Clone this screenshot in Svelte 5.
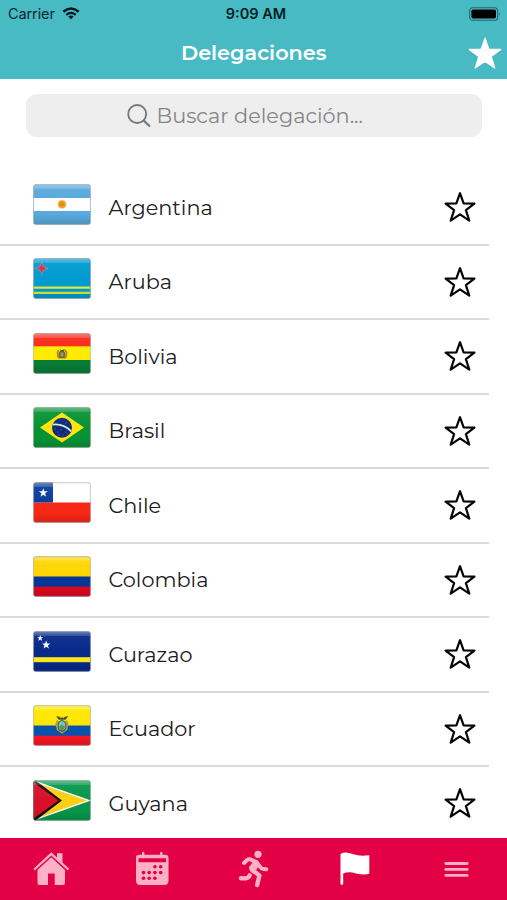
<script>
  let search = $state('');
  let selected = $state('flag');
  let favorites = $state([]);

  const delegations = [
    { id: 'ar', name: 'Argentina' },
    { id: 'aw', name: 'Aruba' },
    { id: 'bo', name: 'Bolivia' },
    { id: 'br', name: 'Brasil' },
    { id: 'cl', name: 'Chile' },
    { id: 'co', name: 'Colombia' },
    { id: 'cw', name: 'Curazao' },
    { id: 'ec', name: 'Ecuador' },
    { id: 'gy', name: 'Guyana' }
  ];

  const tabs = ['home', 'calendar', 'run', 'flag', 'menu'];
  const starPath = 'M16 2L19.6 12.5L30.8 12.6L21.9 19.4L25.2 30.2L16 23.8L6.8 30.2L10.1 19.4L1.2 12.6L12.4 12.5Z';

  let visible = $derived(
    delegations.filter((d) => d.name.toLowerCase().includes(search.toLowerCase()))
  );

  function toggleFavorite(id) {
    favorites = favorites.includes(id) ? favorites.filter((f) => f !== id) : [...favorites, id];
  }
</script>

{#snippet flag(id)}
  <svg class="country" viewBox="0 0 58 41" width="58" height="41">
    <defs>
      <clipPath id="clip-{id}"><rect x=".5" y=".5" width="57" height="40" rx="2.5" /></clipPath>
      <linearGradient id="gloss-{id}" x2="0" y2="1">
        <stop offset="0" stop-color="#fff" stop-opacity=".42" />
        <stop offset=".11" stop-color="#fff" stop-opacity=".2" />
        <stop offset=".13" stop-color="#fff" stop-opacity=".05" />
        <stop offset=".5" stop-color="#fff" stop-opacity="0" />
        <stop offset=".75" stop-color="#000" stop-opacity="0" />
        <stop offset="1" stop-color="#000" stop-opacity=".14" />
      </linearGradient>
    </defs>
    <g clip-path="url(#clip-{id})">
      {#if id === 'ar'}
        <rect width="58" height="41" fill="#58a9dd" />
        <rect y="14" width="58" height="13" fill="#fff" />
        <circle cx="29" cy="20.3" r="4.5" fill="#f8c778" />
        <circle cx="29" cy="20.3" r="3.6" fill="#ee9c22" />
        <circle cx="29" cy="20.3" r="1.8" fill="#d98b22" />
      {:else if id === 'aw'}
        <rect width="58" height="41" fill="#009bd0" />
        <path d="M0 29.6H58M0 34.9H58" stroke="#dce83a" stroke-width="2.4" />
        <path d="M8.7 4.2L10.4 8.6L15 10.3L10.4 12L8.7 16.5L7 12L2.5 10.3L7 8.6Z" fill="#e62935" stroke="#d9e7f3" stroke-opacity=".5" stroke-width=".5" />
      {:else if id === 'bo'}
        <rect width="58" height="14" fill="#fa291a" />
        <rect y="13.3" width="58" height="14" fill="#ffec00" />
        <rect y="27" width="58" height="14" fill="#087c37" />
        <path d="M25.5 17L24.6 19.5L25 24L27 25.5M32 17L33.5 19.5L33 24L31 25.5" fill="none" stroke="#db6829" stroke-width="1.5" />
        <ellipse cx="29" cy="21.5" rx="3.3" ry="4" fill="#327e55" />
        <ellipse cx="29" cy="21.5" rx="1.7" ry="2.3" fill="#e17c4a" />
        <path d="M26.5 16L29 17.4L32 15.8L30.2 18.2L28 18Z" fill="#3d352a" />
      {:else if id === 'br'}
        <rect width="58" height="41" fill="#079334" />
        <path d="M29 5.5L51 20.5L29 35.5L7 20.5Z" fill="#ffe50a" />
        <circle cx="29" cy="20.7" r="10" fill="#102b79" />
        <path d="M19.8 17.6Q30.4 16.4 38.2 24.4" fill="none" stroke="#d4e8eb" stroke-width="1.7" />
        <path d="M21.5 22h1m2 3h1m2-2h1m1 5h1m2-3h1m1 2h1m-10 1h1m6-12h1" stroke="#7393ba" stroke-width=".8" />
      {:else if id === 'cl'}
        <rect width="58" height="41" fill="#fff" />
        <rect y="20.5" width="58" height="21" fill="#f82817" />
        <rect width="20" height="20.5" fill="#0b3d9c" />
        <path d="M10.3 6.2L11.4 9.3H14.8L12.1 11.3L13.1 14.7L10.3 12.7L7.5 14.7L8.5 11.3L5.8 9.3H9.2Z" fill="#fff" />
      {:else if id === 'co'}
        <rect width="58" height="21" fill="#ffd600" />
        <rect y="20.5" width="58" height="10.5" fill="#063596" />
        <rect y="30.7" width="58" height="11" fill="#df0720" />
      {:else if id === 'cw'}
        <rect width="58" height="41" fill="#06298a" />
        <rect y="26.2" width="58" height="5" fill="#f9e71b" />
        <path d="M7.2 4L8 6.2H10.2L8.4 7.6L9.1 10L7.2 8.6L5.3 10L6 7.6L4.2 6.2H6.4Z M13.2 9.5L14.3 12.6H17.3L14.9 14.4L15.9 17.6L13.2 15.7L10.5 17.6L11.5 14.4L9.1 12.6H12.1Z" fill="#fff" />
      {:else if id === 'ec'}
        <rect width="58" height="21" fill="#ffe600" />
        <rect y="20.5" width="58" height="10.5" fill="#0752ac" />
        <rect y="30.7" width="58" height="11" fill="#fa1623" />
        <path d="M23.2 11.3Q26 10.8 28.2 13.2L29 11.4L30 13.2Q32.3 10.8 35.2 11.3L32.6 14.7H25.7Z" fill="#4a4b35" />
        <path d="M24 15L22.3 18.8L23.8 25L29 28.7L34.2 25L35.7 18.8L34 15L31 17H27Z" fill="#c09a35" />
        <ellipse cx="29" cy="21" rx="4.5" ry="6" fill="#4b654e" />
        <ellipse cx="29" cy="20.8" rx="3.3" ry="4.6" fill="#71c7cb" />
        <path d="M26 21.5L29 19.5L32 22Q31.5 25 29 25.4Q26.5 25 26 21.5" fill="#579858" />
      {:else}
        <rect width="58" height="41" fill="#07974a" />
        <path d="M0 0L58 20.5L0 41Z" fill="#fff" />
        <path d="M0 1.5L54 20.5L0 39.5Z" fill="#ffcf15" />
        <path d="M0 0H2L29 20.5L2 41H0Z" fill="#101010" />
        <path d="M0 2L25.5 20.5L0 39Z" fill="#d61029" />
      {/if}
      <rect width="58" height="41" fill="url(#gloss-{id})" />
    </g>
    <rect x=".6" y=".6" width="56.8" height="39.8" rx="2.5" fill="none" stroke="#8c8d90" stroke-opacity=".4" stroke-width="1.1" />
  </svg>
{/snippet}

<div class="app">
  <header>
    <div class="status">
      <div class="carrier">
        <span>Carrier</span>
        <svg width="18" height="13" viewBox="0 0 18 13">
          <path d="M1.3 4.7Q9 -1.7 16.7 4.7" fill="none" stroke="#07191c" stroke-width="2.5" />
          <path d="M4.2 7.8Q9 4.1 13.8 7.8" fill="none" stroke="#07191c" stroke-width="2.2" />
          <path d="M6.2 9.5Q9 7.6 11.8 9.5L9 12.3Z" fill="#07191c" />
        </svg>
      </div>
      <span class="time">9:09 AM</span>
      <svg class="battery" width="32" height="14" viewBox="0 0 32 14">
        <rect x=".7" y=".7" width="28" height="12.6" rx="3.4" fill="none" stroke="#23656c" stroke-width="1.1" />
        <rect x="2.4" y="2.4" width="24.6" height="9.2" rx="1.8" />
        <path d="M30.2 5Q31.8 7 30.2 9Z" fill="#23656c" />
      </svg>
    </div>
    <div class="navbar">
      <h1>Delegaciones</h1>
      <button class="nav-star" aria-label="Favoritos">
        <svg width="34" height="34" viewBox="0 0 32 32">
          <path d={starPath} fill="#fff" stroke="#fff" stroke-width="1.2" stroke-linejoin="round" />
        </svg>
      </button>
    </div>
  </header>

  <main>
    <label class="search">
      <svg width="24" height="24" viewBox="0 0 24 24" fill="none" stroke="#77777a" stroke-width="1.8">
        <circle cx="10.2" cy="10" r="9" />
        <path d="M16.4 16.4L23 22.5" stroke-width="2.2" />
      </svg>
      <input bind:value={search} placeholder="Buscar delegación..." />
    </label>

    <ul>
      {#each visible as d (d.id)}
        <li>
          {@render flag(d.id)}
          <span class="name">{d.name}</span>
          <button class="star" aria-label="Favorito" onclick={() => toggleFavorite(d.id)}>
            <svg width="34" height="34" viewBox="0 0 34 34">
              <path d="M17 3.2L20.6 13.4L31.4 13.6L22.9 20.1L26.3 30.6L17 24.4L7.7 30.6L11.1 20.1L2.6 13.6L13.4 13.4Z"
                fill={favorites.includes(d.id) ? '#000' : 'none'} stroke="#050505" stroke-width="2.2" stroke-linejoin="round" />
            </svg>
          </button>
        </li>
      {/each}
    </ul>
  </main>

  <nav>
    {#each tabs as tab}
      <button class:selected={selected === tab} aria-label={tab} onclick={() => (selected = tab)}>
        <svg width="40" height="40" viewBox="0 0 40 40" fill="currentColor">
          {#if tab === 'home'}
            <path d="M3.8 20L20.3 4.8L36.8 20" fill="none" stroke="currentColor" stroke-width="2.3" stroke-linecap="round" />
            <path d="M26 4.2H31.5V14.4L26 9.3Z" />
            <path d="M20.3 8.3L34 21V34Q34 36 32 36H23.7V24.5H17V36H8.5Q6.5 36 6.5 34V21Z" />
          {:else if tab === 'calendar'}
            <path d="M4 13.2H36.5V31.5Q36.5 36 32 36H8.5Q4 36 4 31.5Z" />
            <path d="M4 9Q4 5.8 7.2 5.8H33.3Q36.5 5.8 36.5 9V14H34V9.3H6.5V14H4Z" />
            <path d="M11.2 4V8M29.3 4V8" stroke="currentColor" stroke-width="2.4" stroke-linecap="round" />
            <g fill="#e30044">
              <circle cx="22.9" cy="17.8" r="1.8" /><circle cx="28.7" cy="17.8" r="1.8" />
              <circle cx="11.5" cy="23.6" r="1.8" /><circle cx="17.2" cy="23.6" r="1.8" />
              <circle cx="22.9" cy="23.6" r="1.8" /><circle cx="28.7" cy="23.6" r="1.8" />
              <circle cx="11.5" cy="29.3" r="1.8" /><circle cx="17.2" cy="29.3" r="1.8" />
              <circle cx="22.9" cy="29.3" r="1.8" />
            </g>
          {:else if tab === 'run'}
            <circle cx="25" cy="5.3" r="3.6" />
            <path d="M11 14L14.4 10.8Q16 9.6 18.4 10.8L23.6 13.1L27.4 18.1Q28.4 19.9 30.4 20L33.4 20.2" fill="none" stroke="currentColor" stroke-width="4" stroke-linecap="round" stroke-linejoin="round" />
            <path d="M16.4 10.1L23.1 12.1L26 16.6L22.9 21.6L18.4 21.3L15.9 18.4L19.4 13.4Z" />
            <path d="M18.3 18.9Q18.4 21.8 23.4 23.9L26.4 26.6L24.2 36M8 29.2H12.9Q15.4 29.2 16.7 26.4" fill="none" stroke="currentColor" stroke-width="4.4" stroke-linecap="round" stroke-linejoin="round" />
          {:else if tab === 'flag'}
            <path d="M5.5 5Q9 2.6 15 4.2L22.5 6.3Q27 7 34.3 6.3V24.8Q29 26.5 21 24.5Q14 22.2 8.2 24.6V35Q6.8 37.1 5.5 35Z" />
          {:else}
            <path d="M9.8 14.5H31.2M9.8 20.4H31.2M9.8 26.4H31.2" stroke="currentColor" stroke-width="2.8" stroke-linecap="round" />
          {/if}
        </svg>
      </button>
    {/each}
  </nav>
</div>

<style>
  :global(body) { background: #fff; }
  .app {
    width: 507px; height: 900px; overflow: hidden;
    display: flex; flex-direction: column;
    font-family: Montserrat, Inter, sans-serif; color: #202020;
  }
  button { border: 0; padding: 0; background: none; cursor: pointer; }
  svg { display: block; flex: none; }

  header { height: 79px; flex: none; background: #48bac4; }
  .status {
    height: 27px; padding: 0 6px 0 8px; display: grid;
    grid-template-columns: 1fr auto 1fr; align-items: center;
    font: 14.5px Inter, sans-serif; color: #08292d;
  }
  .carrier { display: flex; align-items: center; gap: 7px; letter-spacing: -0.1px; }
  .carrier svg { margin-top: -1px; }
  .time { margin-left: 3px; font-size: 14.5px; font-weight: 600; color: #061d20; }
  .battery { justify-self: end; }

  .navbar {
    height: 52px; padding: 0 5px 0 181px;
    display: flex; justify-content: space-between; align-items: center;
  }
  .nav-star { margin-top: -1px; }
  h1 { margin: 0 0 2px; font-size: 20.8px; font-weight: 600; color: #fff; }

  main { flex: 1; min-height: 0; padding-top: 15px; overflow: hidden; }
  .search {
    height: 43px; margin: 0 25px 34px 26px; padding-left: 101px; border-radius: 11px;
    display: flex; align-items: center; gap: 5.5px; background: #eee;
  }
  .search input {
    width: 240px; padding: 0; border: 0; outline: none; background: none;
    font: 20.8px Montserrat, Inter, sans-serif; color: #333;
  }
  .search input::placeholder { color: #858587; opacity: 1; }

  ul { list-style: none; margin: 0; padding: 0; }
  li {
    height: 74.5px; box-sizing: border-box; margin-right: 18px;
    padding: 0 12px 0 33px; display: flex; align-items: center;
    border-bottom: 2px solid #dadadc;
  }
  .country { margin-top: -6px; }
  .name { flex: 1; margin-left: 17.5px; font-size: 20.8px; }

  nav {
    height: 62px; flex: none; background: #e30044;
    display: grid; grid-template-columns: repeat(5, 1fr);
  }
  nav button {
    display: flex; align-items: center; justify-content: center;
    color: #fdb0c8;
  }
  nav button.selected { color: #fff; }
</style>
